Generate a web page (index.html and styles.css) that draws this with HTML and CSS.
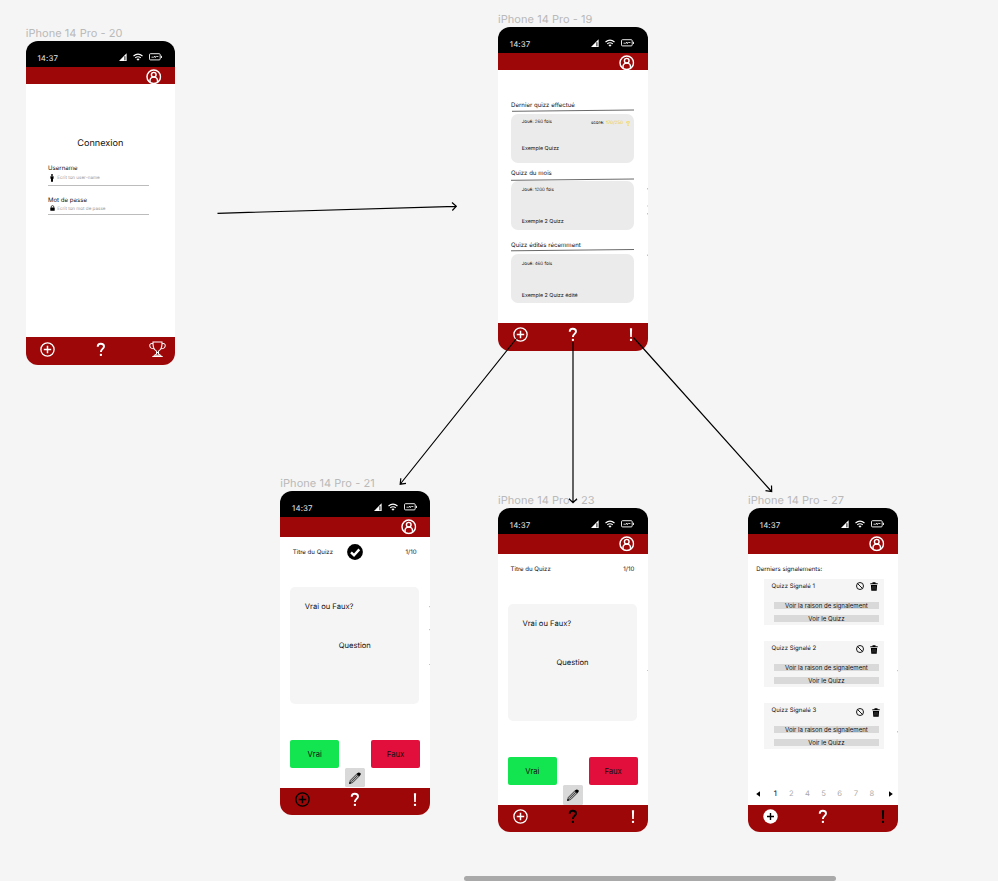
FILE: index.html
```html
<!DOCTYPE html>
<html lang="fr">
<head>
<meta charset="utf-8">
<title>Quizz – maquettes</title>
<link rel="stylesheet" href="styles.css">
</head>
<body>
<svg class="defs" width="0" height="0">
  <symbol id="signal" viewBox="0 0 8 8"><path d="M0 8 7.600.3V8z" fill="#fff"/><path d="M5.900 3.200V7.300" stroke="#000" stroke-width=".9"/></symbol>
  <symbol id="wifi" viewBox="0 0 10 8"><g fill="none" stroke="#fff" stroke-width="1.100"><path d="M.5 3Q5-.8 9.500 3"/><path d="M2.200 4.900Q5 2.500 7.800 4.900"/></g><path d="M3.400 6Q5 4.800 6.600 6L5 7.800z" fill="#fff"/></symbol>
  <symbol id="battery" viewBox="0 0 13 8"><rect x=".5" y=".7" width="10.700" height="6.200" rx="1" fill="none" stroke="#fff" stroke-width=".9"/><path d="M12.500 2.800v2.200" stroke="#fff" stroke-width=".9"/><path d="M2.500 4.200h2.200l1.300-1.100v1.500l1.400-1.100h2" fill="none" stroke="#fff" stroke-width=".8"/></symbol>
  <symbol id="user" viewBox="0 0 16 16"><g fill="none" stroke="#fff" stroke-width="1.500"><circle cx="8" cy="8" r="7"/><circle cx="8" cy="5.900" r="2.400"/><path d="M4.100 13.800V12.300C4.100 10 5.500 8.400 8 8.400s3.900 1.600 3.900 3.900V13.800"/></g></symbol>
  <symbol id="plus" viewBox="0 0 15 15"><g fill="none" stroke="currentColor" stroke-width="1.300"><circle cx="7.500" cy="7.500" r="6.600"/><path d="M7.500 3.800v7.400M3.800 7.500h7.400" stroke-width="1.500"/></g></symbol>
  <symbol id="plus-full" viewBox="0 0 15 15"><circle cx="7.500" cy="7.500" r="7.200" fill="#fff"/><path d="M7.500 4v7M4 7.500h7" stroke="#000" stroke-width="1.400"/></symbol>
  <symbol id="question" viewBox="0 0 10 16"><path d="M1.700 4.800C1.700 2.700 3 1.800 4.800 1.800S8 2.800 8 4.500C8 6.900 4.900 7 4.900 10" fill="none" stroke="currentColor" stroke-width="1.900"/><rect x="3.800" y="11.700" width="2.200" height="2.400" rx=".8" fill="currentColor"/></symbol>
  <symbol id="bang" viewBox="0 0 4 16"><path d="M.9 1.300h2.200L2.800 10H1.200z" fill="currentColor"/><rect x=".9" y="11.800" width="2.200" height="2.200" rx=".7" fill="currentColor"/></symbol>
  <symbol id="trophy" viewBox="0 0 18 18"><g fill="none" stroke="currentColor" stroke-width="1.100"><path d="M4.200 1h9.600c.1 4.700-1.300 8.600-3.800 9.700v2.600c0 1.500 2.800 1.200 3 3.100H5c.2-1.900 3-1.600 3-3.100v-2.600C5.500 9.600 4.100 5.700 4.200 1z"/><path d="M4.200 3C2 2.200.6 3.200.8 5c.2 2.100 1.800 3.200 4.500 3.200M13.800 3c2.200-.8 3.600.2 3.400 2-.2 2.100-1.800 3.200-4.500 3.200M7.700 12.200h2.600M3.500 16.500h11M6.500 15h5"/></g></symbol>
  <symbol id="person" viewBox="0 0 4 8"><circle cx="2" cy="1" r=".95"/><path d="M.4 2.200h3.200v2.600H3V7.800H1V4.800H.4z"/></symbol>
  <symbol id="lock" viewBox="0 0 5 6"><path d="M1.200 2.800V1.900a1.300 1.300 0 0 1 2.600 0v.9" fill="none" stroke="#000" stroke-width=".7"/><rect x=".3" y="2.400" width="4.400" height="3.400" rx=".5"/></symbol>
  <symbol id="check" viewBox="0 0 16 16"><circle cx="8" cy="8" r="7.900"/><path d="M4 8.300 7 11.200 12.300 5.400" fill="none" stroke="#fff" stroke-width="2.400"/></symbol>
  <symbol id="pencil" viewBox="0 0 12 12"><path d="M.4 11.600 1.400 8.300 8.300 1.400 10.600 3.700 3.700 10.600z" fill="#aaa" stroke="#222" stroke-width=".8"/><path d="M2.400 9.600 9 3M.4 11.600 2 11 1 10z" stroke="#222" stroke-width=".7"/><path d="M7.700 2 9 .7Q10 0 11.200.9T11.300 3L10 4.300z"/></symbol>
  <symbol id="ban" viewBox="0 0 8 8"><g fill="none" stroke="#000" stroke-width=".9"><circle cx="4" cy="4" r="3.500"/><path d="M1.600 1.600l4.800 4.800"/></g></symbol>
  <symbol id="trash" viewBox="0 0 8 9"><path d="M.3 1.200h2.200V.3h3v.9h2.200v1.100H.3zM.9 2.900h6.200L6.700 8.800H1.300z"/><path d="M3 4v3.600M5 4v3.600" stroke="#888" stroke-width=".5"/></symbol>
  <symbol id="cup" viewBox="0 0 4 5"><path d="M1 .5h2v1.300Q2.800 3 2 3T1 1.800zM2 3v1.400M1.200 4.500h1.600M1 .9H.3l.7 1M3 .9h.7l-.7 1" fill="none" stroke="#f5d84a" stroke-width=".6"/></symbol>
</svg>

<main class="canvas">
  <section class="board b20">
    <h2 class="label">iPhone 14 Pro - 20</h2>
    <div class="phone">
      <div class="status"><span class="time">14:37</span><svg class="i-signal"><use href="#signal"/></svg><svg class="i-wifi"><use href="#wifi"/></svg><svg class="i-battery"><use href="#battery"/></svg></div>
      <div class="topbar short"><svg class="i-user"><use href="#user"/></svg></div>
      <div class="screen login">
        <h3>Connexion</h3>
        <label>Username</label>
        <div class="field"><svg class="i-person"><use href="#person"/></svg><span>Ecrit ton user-name</span></div>
        <label class="second">Mot de passe</label>
        <div class="field pass"><svg class="i-lock"><use href="#lock"/></svg><span>Ecrit ton mot de passe</span></div>
      </div>
      <nav class="nav"><svg class="i-plus"><use href="#plus"/></svg><svg class="i-question"><use href="#question"/></svg><svg class="i-trophy"><use href="#trophy"/></svg></nav>
    </div>
  </section>

  <section class="board b19">
    <h2 class="label">iPhone 14 Pro - 19</h2>
    <div class="phone">
      <div class="status"><span class="time">14:37</span><svg class="i-signal"><use href="#signal"/></svg><svg class="i-wifi"><use href="#wifi"/></svg><svg class="i-battery"><use href="#battery"/></svg></div>
      <div class="topbar short"><svg class="i-user"><use href="#user"/></svg></div>
      <div class="screen home">
        <h3>Dernier quizz effectué</h3>
        <svg class="rule" viewBox="0 0 123 3"><path d="M1 2.300 123 1"/></svg>
        <article class="tile"><div class="meta"><span>Joué: 260 fois</span><span class="score">score: <b>170/250</b><svg class="i-cup"><use href="#cup"/></svg></span></div><p>Exemple Quizz</p></article>
        <h3 class="month">Quizz du mois</h3>
        <svg class="rule" viewBox="0 0 123 3"><path d="M0 2.300 123 1"/></svg>
        <article class="tile tall"><div class="meta"><span>Joué: 1200 fois</span></div><p>Exemple 2 Quizz</p></article>
        <h3 class="recent">Quizz édités récemment</h3>
        <svg class="rule" viewBox="0 0 123 3"><path d="M0 1.800 123 .5"/></svg>
        <article class="tile tall last"><div class="meta"><span>Joué: 460 fois</span></div><p>Exemple 2 Quizz édité</p></article>
      </div>
      <nav class="nav"><svg class="i-plus"><use href="#plus"/></svg><svg class="i-question"><use href="#question"/></svg><svg class="i-bang near"><use href="#bang"/></svg></nav>
    </div>
  </section>

  <section class="board low b21">
    <h2 class="label">iPhone 14 Pro - 21</h2>
    <div class="phone">
      <div class="status"><span class="time">14:37</span><svg class="i-signal"><use href="#signal"/></svg><svg class="i-wifi"><use href="#wifi"/></svg><svg class="i-battery"><use href="#battery"/></svg></div>
      <div class="topbar"><svg class="i-user"><use href="#user"/></svg></div>
      <div class="screen quiz">
        <header><span>Titre du Quizz</span><svg class="i-check"><use href="#check"/></svg><span class="count">1/10</span></header>
        <div class="card"><h3>Vrai ou Faux?</h3><p>Question</p></div>
        <div class="answers"><button class="yes">Vrai</button><button class="no">Faux</button></div>
        <div class="edit"><svg class="i-pencil"><use href="#pencil"/></svg></div>
      </div>
      <nav class="nav"><svg class="i-plus on"><use href="#plus"/></svg><svg class="i-question"><use href="#question"/></svg><svg class="i-bang"><use href="#bang"/></svg></nav>
    </div>
  </section>

  <section class="board low b23">
    <h2 class="label">iPhone 14 Pro - 23</h2>
    <div class="phone">
      <div class="status"><span class="time">14:37</span><svg class="i-signal"><use href="#signal"/></svg><svg class="i-wifi"><use href="#wifi"/></svg><svg class="i-battery"><use href="#battery"/></svg></div>
      <div class="topbar"><svg class="i-user"><use href="#user"/></svg></div>
      <div class="screen quiz">
        <header><span>Titre du Quizz</span><span class="count">1/10</span></header>
        <div class="card"><h3>Vrai ou Faux?</h3><p>Question</p></div>
        <div class="answers"><button class="yes">Vrai</button><button class="no">Faux</button></div>
        <div class="edit"><svg class="i-pencil"><use href="#pencil"/></svg></div>
      </div>
      <nav class="nav"><svg class="i-plus"><use href="#plus"/></svg><svg class="i-question on"><use href="#question"/></svg><svg class="i-bang"><use href="#bang"/></svg></nav>
    </div>
  </section>

  <section class="board low b27">
    <h2 class="label">iPhone 14 Pro - 27</h2>
    <div class="phone">
      <div class="status"><span class="time">14:37</span><svg class="i-signal"><use href="#signal"/></svg><svg class="i-wifi"><use href="#wifi"/></svg><svg class="i-battery"><use href="#battery"/></svg></div>
      <div class="topbar"><svg class="i-user"><use href="#user"/></svg></div>
      <div class="screen reports">
        <h3>Derniers signalements:</h3>
        <article class="report"><div class="head"><span>Quizz Signalé 1</span><svg class="i-ban"><use href="#ban"/></svg><svg class="i-trash"><use href="#trash"/></svg></div><button>Voir la raison de signalement</button><button>Voir le Quizz</button></article>
        <article class="report second"><div class="head"><span>Quizz Signalé 2</span><svg class="i-ban"><use href="#ban"/></svg><svg class="i-trash"><use href="#trash"/></svg></div><button>Voir la raison de signalement</button><button>Voir le Quizz</button></article>
        <article class="report third"><div class="head"><span>Quizz Signalé 3</span><svg class="i-ban"><use href="#ban"/></svg><svg class="i-trash"><use href="#trash"/></svg></div><button>Voir la raison de signalement</button><button>Voir le Quizz</button></article>
        <div class="pager"><svg class="arrow" viewBox="0 0 4 6"><path d="M4 .3v5.400L.2 3z"/></svg><span class="cur">1</span><span>2</span><span>4</span><span>5</span><span>6</span><span>7</span><span>8</span><svg class="arrow" viewBox="0 0 4 6"><path d="M0 .3v5.400L3.800 3z"/></svg></div>
      </div>
      <nav class="nav"><svg class="i-plus"><use href="#plus-full"/></svg><svg class="i-question"><use href="#question"/></svg><svg class="i-bang on"><use href="#bang"/></svg></nav>
    </div>
  </section>

  <svg class="links" viewBox="0 0 998 881">
    <g fill="none" stroke="#000" stroke-width="1.200">
      <path d="M217.500 213.300 456 206.300M452 202.500l4.300 3.800-4 4.200"/>
      <path d="M516.500 338.500 400.300 484M400.800 478.300l-.6 5.900 5.800-.9"/>
      <path d="M573 342V502.500M569 498.700l4 3.900 4-3.900"/>
      <path d="M633.500 337.500 771.500 491.500M765.500 490.700l6.200.9-.2-6"/>
    </g>
    <path d="M647.500 188v1.500M647.500 205.500v1M647.500 213v1.500M647.500 254.500v1.500M429.500 606v1.200M429.500 629v1.200M429.500 664v1M647.500 670v1M897.500 670v1.200M897.500 731v1.500" stroke="#c4c4c4"/>
  </svg>
  <div class="scrollbar"></div>
</main>
</body>
</html>
```
FILE: styles.css
```css
* { box-sizing: border-box; margin: 0; padding: 0; }
html, body { width: 998px; height: 881px; overflow: hidden; }
body { background: #f5f5f5; font-family: Inter, "Liberation Sans", sans-serif; color: #111; text-rendering: geometricPrecision; }
svg { display: block; flex: none; overflow: visible; }
h2, h3 { font-weight: 400; font-size: inherit; }
button { border: 0; font: inherit; color: inherit; display: block; }
.defs { position: absolute; }
.canvas { position: relative; width: 998px; height: 881px; overflow: hidden; }

/* Artboards placed on the free canvas */
.board { position: absolute; width: 149.500px; }
.b20 { left: 25.700px; top: 26px; }
.b19 { left: 498px; top: 12px; }
.b21 { left: 280.300px; top: 476px; }
.b23 { left: 498px; top: 493.300px; }
.b27 { left: 748px; top: 493.300px; }
.links { position: absolute; inset: 0; width: 998px; height: 881px; }
.scrollbar { position: absolute; left: 464px; top: 876px; width: 372px; height: 5px; border-radius: 2.500px; background: #a9a9a9; }

.board .label { height: 15px; line-height: 15px; font-size: 11px; letter-spacing: .05px; color: #b9b9b9; white-space: nowrap; }
.phone { height: 323.500px; border-radius: 12px; overflow: hidden; background: #fff; display: flex; flex-direction: column; font-size: 6.090px; }
.low .phone { height: 324px; }
.status { height: 26px; background: #000; color: #fff; display: flex; align-items: flex-start; padding: 12px 0 0 11.800px; flex: none; }
.time { width: 81.700px; font-size: 7.900px; line-height: 10px; letter-spacing: .12px; color: #e8e8e8; }
.i-signal { width: 8px; height: 8px; }
.i-wifi { width: 10px; height: 8px; margin-left: 6px; }
.i-battery { width: 13px; height: 8px; margin-left: 6px; }
.topbar { height: 20px; background: #9d0708; overflow: hidden; padding: 1.800px 0 0 120.600px; flex: none; }
.topbar.short { height: 17px; padding-top: 1.500px; }
.i-user { width: 15.500px; height: 15.500px; }
.screen { flex: 1; min-height: 0; display: flex; flex-direction: column; }
.screen > * { flex: none; }
.nav { height: 27.500px; flex: none; background: #9d0708; color: #fff; display: flex; padding: 4.500px 0 0 14.500px; }
.i-plus { width: 15px; height: 15px; }
.i-question { width: 10px; height: 16px; margin: 0 0 0 40.400px; }
.i-trophy { width: 17px; height: 17px; margin: -1px 0 0 43.800px; }
.i-bang { width: 4px; height: 16px; margin-left: 53px; }
.i-bang.near { margin-left: 50.700px; }
.b19 .nav { padding-top: 4px; }
.on { color: #000; }

/* Login */
.login { padding: 54px 26.500px 0 22.300px; }
.login h3 { font-size: 9.130px; line-height: 12px; text-align: center; margin: 0 0 15px 4px; }
.login label { line-height: 8px; height: 9px; }
.login .second { margin-top: 11.500px; height: 8px; }
.field { height: 11.500px; border-bottom: 1px solid #bcbcbc; display: flex; color: #999; font-size: 4.570px; line-height: 9px; }
.field.pass { height: 10px; }
.i-person { width: 4px; height: 8px; margin: 0 3px 0 2.200px; }
.i-lock { width: 5px; height: 6px; margin: 0 2.200px 0 2px; }

/* Home */
.home { padding: 29px 13px 0; }
.home h3 { line-height: 11px; height: 10px; padding-top: .5px; white-space: nowrap; }
.home .month { margin-top: 4.500px; }
.home .recent { margin-top: 9px; }
.rule { width: 123px; height: 3px; fill: none; stroke: #444; stroke-width: .8; }
.tile { width: 123px; height: 49.500px; margin-top: 1.500px; border-radius: 7px; background: #ebebeb; padding: 5px 4px 0 10.700px; }
.tile.tall { margin-top: .3px; padding-top: 6.500px; }
.tile.last { margin-top: 1.700px; }
.meta { display: flex; justify-content: space-between; font-size: 4.480px; line-height: 7px; }
.score { display: flex; padding-top: 1.500px; }
.score b { font-weight: 400; color: #f0c92c; margin: 0 3px 0 2px; }
.i-cup { width: 4px; height: 5px; margin-top: .7px; }
.tile p { margin-top: 18px; line-height: 8px; font-size: 5.330px; }
.tile.tall p { margin-top: 24px; }
.tile.last { padding-top: 7.300px; }

/* Quiz */
.quiz { padding: 0 10px; }
.quiz header { height: 30px; display: grid; grid-template-columns: 54px 16px 1fr; align-items: center; margin: 0 3px 0 2.500px; line-height: 8px; }
.quiz header span { padding-top: 1px; }
.quiz .count { grid-column: 3; text-align: right; letter-spacing: .1px; }
.i-check { width: 16px; height: 16px; }
.card { margin-top: 20px; height: 117.200px; width: 129px; border-radius: 5px; background: #f5f5f5; font-size: 7.610px; }
.card h3 { padding: 15px 0 0 14.500px; line-height: 10px; }
.card p { margin-top: 28.800px; line-height: 10px; text-align: center; }
.answers { display: flex; justify-content: space-between; margin: 35.900px 0 0; }
.answers button { width: 48.700px; height: 28px; border-radius: 2px; font-size: 7.610px; line-height: 29px; }
.yes { background: #13e551; }
.no { background: #e20f3c; }
.edit { width: 19.500px; height: 19.400px; margin: 0 auto; border-radius: 1.500px; background: #d9d9d9; display: grid; place-items: center; }
.i-pencil { width: 12px; height: 12px; }

/* Reports */
.reports { padding: 11.200px 13.500px 0 15.800px; }
.reports h3 { line-height: 10px; margin: 0 0 3.500px -7.500px; white-space: nowrap; }
.report { width: 120px; height: 46px; margin-bottom: 16px; background: #f5f5f5; }
.head { height: 23px; padding: 3.500px 5.500px 0 7.800px; display: flex; align-items: flex-start; line-height: 10px; }
.head span { flex: 1; }
.i-ban { width: 8px; height: 8px; margin: 0 6.500px 0 0; }
.i-trash { width: 8px; height: 9px; margin-top: -.5px; }
.second .i-ban { margin-top: 1px; margin-right: 6px; }
.second .i-trash { margin-top: .2px; }
.third .head { padding-right: 4px; }
.third .head svg { margin-top: 1.900px; }
.third .i-ban { margin-right: 8.200px; }
.report button { width: 104.700px; height: 7.300px; line-height: 7.600px; margin: 0 0 5.500px 10.300px; background: #d9d9d9; text-align: center; }
.pager { margin: auto -9px 6px -8px; height: 10px; display: flex; align-items: center; font-size: 7.610px; line-height: 10px; color: #aaa; }
.pager span { width: 16.100px; text-align: center; }
.pager .cur { color: #000; margin-left: 7.500px; }
.pager .arrow { width: 4px; height: 6px; }
.pager .arrow:last-child { margin-left: 9px; }
```
